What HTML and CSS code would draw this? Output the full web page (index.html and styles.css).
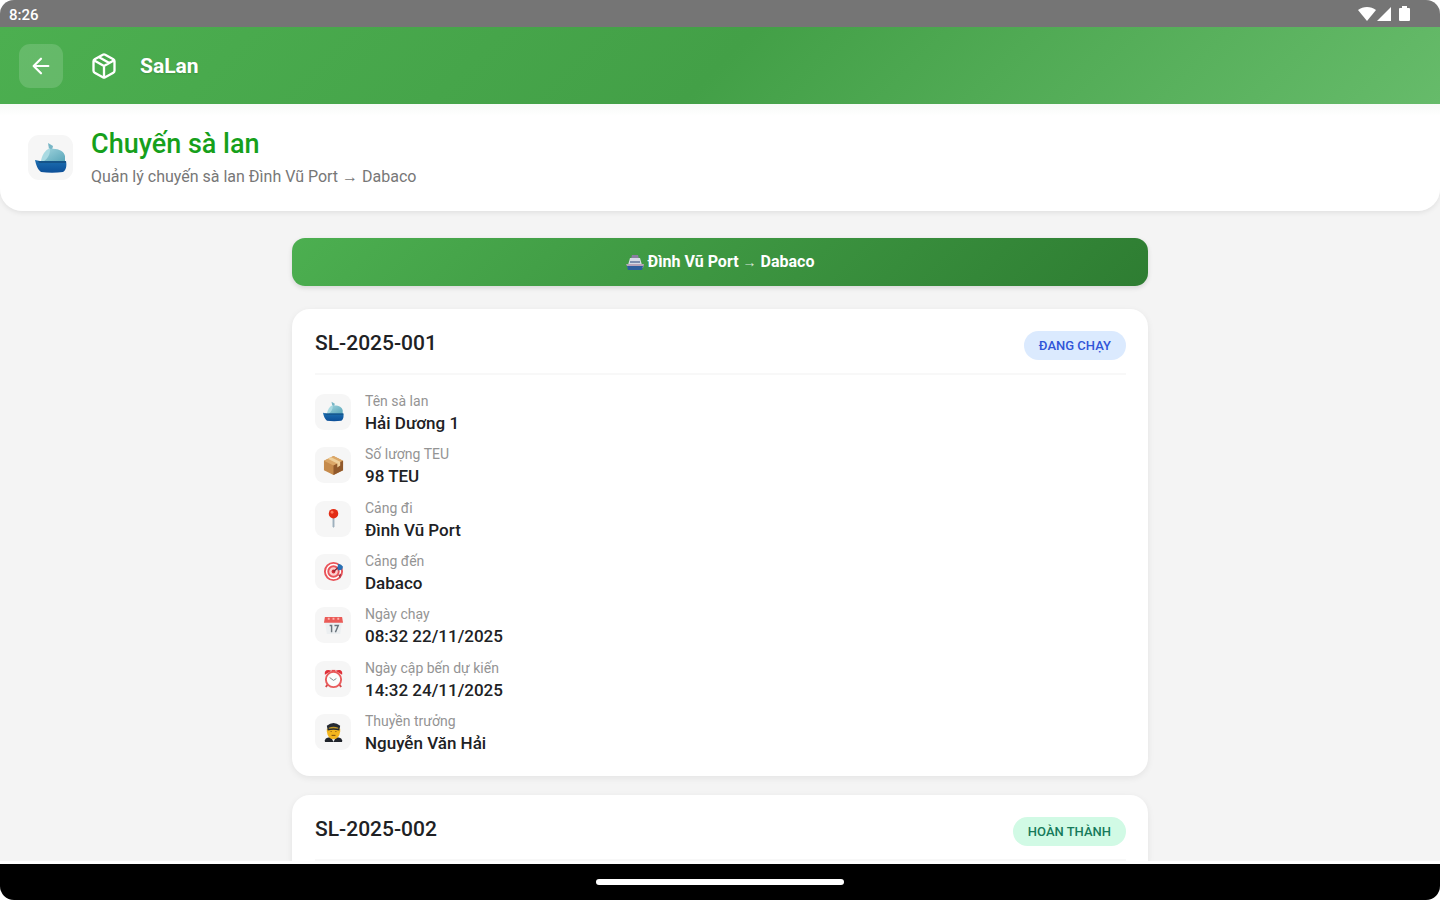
FILE: index.html
```html
<!DOCTYPE html>
<html lang="vi">
<head>
<meta charset="utf-8">
<meta name="viewport" content="width=device-width, initial-scale=1">
<title>SaLan</title>
<link rel="stylesheet" href="styles.css">
</head>
<body>
<svg class="defs" width="0" height="0" aria-hidden="true">
  <defs>
    <linearGradient id="sail" x1="0" y1="0" x2="1" y2="1"><stop offset="0" stop-color="#9fd3dd"/><stop offset="1" stop-color="#58a5b8"/></linearGradient>
    <linearGradient id="hull" x1="0" y1="0" x2="0" y2="1"><stop offset="0" stop-color="#1d6fb0"/><stop offset="1" stop-color="#0c4f98"/></linearGradient>
    <symbol id="boat" viewBox="0 0 32 32">
      <path d="M13 1l5 3-1 4-3-1z" fill="#78b6c6"/>
      <path d="M15 6C10 8 7 13 6 19h11z" fill="#a9dae2"/>
      <path d="M15 7c8-1 14 2 15 7v6H8c5-4 7-7 7-13z" fill="url(#sail)"/>
      <path d="M0 18l5 1h26c1 5 0 9-3 11-7 1-15 1-22 0-3-2-5-7-6-12z" fill="url(#hull)"/>
      <path d="M3 19h28v2H4z" fill="#155489"/>
    </symbol>
  </defs>
</svg>
<div class="device">
  <div class="statusbar">
    <span class="clock">8:26</span>
    <svg class="signals" width="54" height="18" viewBox="0 0 54 18" fill="#fff" aria-hidden="true">
      <path d="M0 5C5 1 13 1 18 5L9 16z"/>
      <path d="M33 2v14H19z"/>
      <path d="M42 3h2V1h5v2h2q1 0 1 1v11q0 1-1 1h-9q-1 0-1-1V4q0-1 1-1z"/>
    </svg>
  </div>
  <header class="appbar">
    <button class="back" type="button" aria-label="Quay lại">
      <svg width="22" height="22" viewBox="0 0 24 24" fill="none" stroke="#fff" stroke-width="2.400" stroke-linecap="round" stroke-linejoin="round"><path d="M20 12H5M12 4l-8 8 8 8"/></svg>
    </button>
    <svg class="cube" width="28" height="28" viewBox="0 0 24 24" fill="none" stroke="#fff" stroke-width="2" stroke-linecap="round" stroke-linejoin="round" aria-hidden="true">
      <path d="M21 16V8a2 2 0 0 0-1-1.700l-7-4a2 2 0 0 0-2 0l-7 4A2 2 0 0 0 3 8v8a2 2 0 0 0 1 1.700l7 4a2 2 0 0 0 2 0l7-4a2 2 0 0 0 1-1.700zM3.300 7l8.700 5 8.700-5M12 22V12M7.500 4.200l9 5.200"/>
    </svg>
    <span class="appname">SaLan</span>
  </header>
  <main class="content">
    <section class="intro">
      <span class="tile tile-large"><svg width="32" height="32"><use href="#boat"/></svg></span>
      <div>
        <h1>Chuyến sà lan</h1>
        <p>Quản lý chuyến sà lan Đình Vũ Port → Dabaco</p>
      </div>
    </section>
    <div class="column">
      <button class="route" type="button">
        <svg width="18" height="18" viewBox="0 0 18 18" aria-hidden="true">
          <path d="M6 2h6l1 4H5z" fill="#8a7fa0"/><path d="M4 5h10l2 7H2z" fill="#d5dbe6"/><path d="M4 8h10v2H4z" fill="#7c8fb0"/>
          <path d="M0 11h18l-1 4H2z" fill="#b7a4b8"/><path d="M1 13h16l-1 4H2z" fill="#2d5f9e"/>
        </svg>
        <span>Đình Vũ Port <span class="arrow">→</span> Dabaco</span>
      </button>
      <article class="card">
        <div class="card-head"><h2>SL-2025-001</h2><span class="badge running">ĐANG CHẠY</span></div>
        <dl class="details">
          <div class="row"><span class="tile"><svg width="21" height="21"><use href="#boat"/></svg></span><div><dt>Tên sà lan</dt><dd>Hải Dương 1</dd></div></div>
          <div class="row"><span class="tile"><svg width="21" height="21" viewBox="0 0 22 22"><path d="M1 6l10-5 10 5v10l-10 5-10-5z" fill="#c68b4c"/><path d="M1 6l10-5 10 5-10 5z" fill="#dba768"/><path d="M11 11l10-5v10l-10 5z" fill="#91592b"/><path d="M5 4l10 5v4l3-2V7L8 2z" fill="#efcf9a"/></svg></span><div><dt>Số lượng TEU</dt><dd>98 TEU</dd></div></div>
          <div class="row"><span class="tile"><svg width="21" height="21" viewBox="0 0 22 22"><path d="M10 10h2v9l-1 2-1-2z" fill="#9eb0bd"/><circle cx="11" cy="6" r="5" fill="#e32d16"/><circle cx="9.500" cy="4.500" r="1.500" fill="#ff7b5d"/></svg></span><div><dt>Cảng đi</dt><dd>Đình Vũ Port</dd></div></div>
          <div class="row"><span class="tile"><svg width="21" height="21" viewBox="0 0 22 22"><circle cx="11" cy="11" r="9" fill="#fff" stroke="#e9545a" stroke-width="2"/><circle cx="11" cy="11" r="5.500" fill="#fbd0d0" stroke="#e9545a" stroke-width="2"/><circle cx="11" cy="11" r="2" fill="#d92c35"/><path d="M11 11l6-5" stroke="#812737" stroke-width="1.500"/><path d="M15 7l1-4 3 1 2 2-1 3-4 1z" fill="#286fb3"/><path d="M16 15l3-2-1 5z" fill="#983344"/></svg></span><div><dt>Cảng đến</dt><dd>Dabaco</dd></div></div>
          <div class="row"><span class="tile"><svg width="21" height="21" viewBox="0 0 22 22"><path d="M2 7h18l-2 13H4z" fill="#eceff1"/><path d="M2 2h18l1 6H1z" fill="#ea5b57"/><path d="M5 4h2M10 4h2M15 4h2" stroke="#ffb3ae" stroke-width="2"/><path d="M7 11h2v7M12 11h4l-3 7" stroke="#68737b" stroke-width="1.500" fill="none"/></svg></span><div><dt>Ngày chạy</dt><dd>08:32 22/11/2025</dd></div></div>
          <div class="row"><span class="tile"><svg width="21" height="21" viewBox="0 0 22 22"><path d="M5 17l-2 3M17 17l2 3" stroke="#d4494b" stroke-width="2"/><path d="M2 7c-1-4 2-6 7-4zM20 7c1-4-2-6-7-4z" fill="#df3038"/><path d="M9 2h4v3H9z" fill="#e54a4d"/><circle cx="11" cy="12" r="8" fill="#fbfdfc" stroke="#e85b5b" stroke-width="2"/><path d="M7 10l4 3 3-2" stroke="#76888b" stroke-width="1" fill="none"/></svg></span><div><dt>Ngày cập bến dự kiến</dt><dd>14:32 24/11/2025</dd></div></div>
          <div class="row"><span class="tile"><svg width="21" height="21" viewBox="0 0 22 22"><path d="M2 21v-2q1-3 6-3h6q5 0 6 3v2z" fill="#20242b"/><path d="M8 15h6l-3 6z" fill="#eef0f0"/><path d="M4 7h14v3q-1 8-7 8t-7-8z" fill="#f2b51d"/><path d="M4 4q7-6 14 0l-1 5q-6-2-12 0z" fill="#252a33"/><path d="M6 6q5-2 10 0v1q-5-1-10 0z" fill="#c49a25"/><path d="M8 10h1M13 10h1M9 14h4" stroke="#72480f"/></svg></span><div><dt>Thuyền trưởng</dt><dd>Nguyễn Văn Hải</dd></div></div>
        </dl>
      </article>
      <article class="card">
        <div class="card-head"><h2>SL-2025-002</h2><span class="badge done">HOÀN THÀNH</span></div>
      </article>
    </div>
  </main>
  <footer class="navbar"><span class="handle"></span></footer>
</div>
</body>
</html>
```
FILE: styles.css
```css
* { box-sizing: border-box; }
body { margin: 0; background: #fff; font-family: Roboto, "Noto Sans", sans-serif; color: #202124; }
h1, h2, p, dl, dd { margin: 0; }
svg { display: block; flex: none; }
button { border: 0; padding: 0; font: inherit; cursor: pointer; }
.defs { position: absolute; }
.device { height: 100vh; display: flex; flex-direction: column; overflow: hidden; border-radius: 14px; background: #f4f4f4; }
.statusbar { flex: none; height: 27px; padding: 0 28px 0 9px; display: flex; align-items: center; justify-content: space-between; background: #757575; color: #fff; }
.clock { font-size: 15px; font-weight: 500; line-height: 20px; padding-top: 3px; }
.appbar { flex: none; height: 77px; padding: 0 19px; display: flex; align-items: center; background: linear-gradient(135deg, #4caf50 0%, #43a047 50%, #66bb6a 100%); color: #fff; }
.back { width: 44px; height: 44px; display: grid; place-items: center; border-radius: 11px; background: rgba(255, 255, 255, .15); }
.cube { margin: 0 22px 0 27px; }
.appname { font-size: 21px; font-weight: 700; line-height: 28px; text-shadow: 0 1px 2px rgba(0, 0, 0, .15); }
.content { flex: 1; min-height: 0; overflow: hidden; border-bottom: 3px solid #fff; }
.intro { min-height: 107px; padding: 0 28px; display: flex; align-items: center; gap: 18px; background: linear-gradient(#f7faf7, #fff 12px); border-radius: 0 0 22px 22px; box-shadow: 0 2px 5px rgba(0, 0, 0, .08); }
.intro h1 { color: #16a01b; font-size: 27px; font-weight: 500; line-height: 36px; }
.intro p { color: #777; font-size: 16px; line-height: 24px; padding-top: 3px; }
.tile { flex: none; width: 36px; height: 36px; display: grid; place-items: center; border-radius: 9px; background: #f6f6f6; }
.tile-large { width: 45px; height: 45px; border-radius: 11px; }
.column { width: calc(100% - 48px); max-width: 856px; margin: 0 auto; padding-top: 27px; }
.route { width: 100%; height: 48px; display: flex; align-items: center; justify-content: center; gap: 4px; border-radius: 13px; background: linear-gradient(135deg, #4caf50, #2e7d32); box-shadow: 0 2px 5px rgba(0, 0, 0, .12); color: #fff; font-size: 16px; font-weight: 700; line-height: 24px; }
.arrow { font-size: 14px; opacity: .8; }
.card { margin-top: 23px; padding: 22px 22px 17px 23px; border-radius: 18px; background: #fff; box-shadow: 0 2px 7px rgba(0, 0, 0, .07); }
.card + .card { margin-top: 19px; }
.card-head { height: 44px; display: flex; align-items: flex-start; justify-content: space-between; border-bottom: 2px solid #f8f8f8; }
.card-head h2 { font-size: 21px; font-weight: 500; line-height: 24px; }
.badge { padding: 0 15px; border-radius: 15px; font-size: 13px; font-weight: 500; line-height: 29px; }
.running { background: #dbeafe; color: #3155d8; }
.done { background: #d1fae5; color: #167a5b; }
.details { min-height: 384px; padding-top: 10px; display: grid; grid-auto-rows: 1fr; }
.row { display: flex; align-items: center; gap: 14px; }
.row dt { color: #949494; font-size: 14px; line-height: 22px; }
.row dd { font-size: 17px; font-weight: 500; line-height: 22px; }
.navbar { flex: none; height: 36px; display: grid; place-items: center; background: #000; }
.handle { width: 248px; height: 6px; border-radius: 3px; background: #fff; }
```
